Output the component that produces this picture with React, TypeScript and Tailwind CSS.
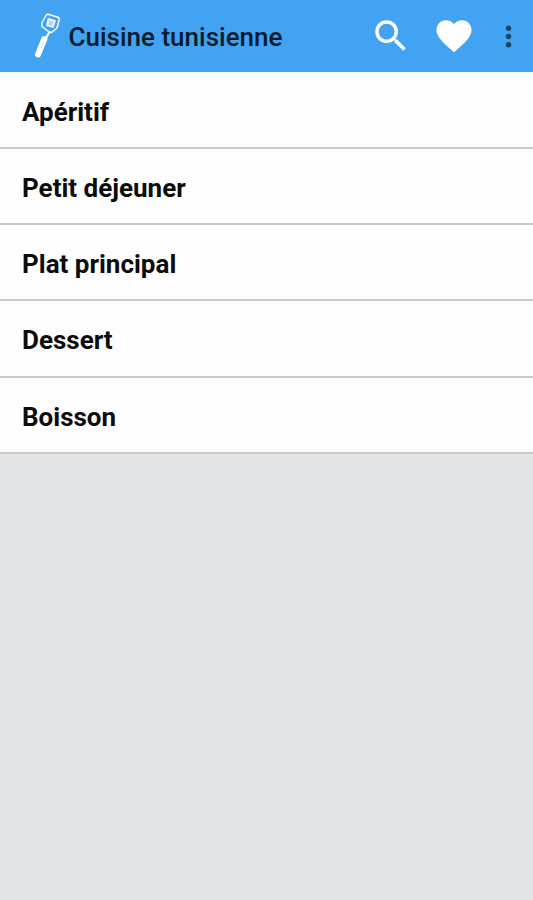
import React from "react";
import { MdFavorite, MdMoreVert, MdSearch } from "react-icons/md";

const CATEGORIES = ["Apéritif", "Petit déjeuner", "Plat principal", "Dessert", "Boisson"];

function SpatulaIcon() {
  return (
    <svg width="28" height="46" viewBox="0 0 28 46" fill="none">
      {/* blade */}
      <path
        d="M13 2.500 Q13.500 1 15 1.300 L25 4.300 Q26.500 5 26.200 6.500 L24 15 L18.500 19.500 L16 19 L9 13.500 L8.700 10 Z"
        stroke="white"
        strokeWidth="1.500"
        strokeLinejoin="round"
      />
      <path
        d="M15.500 5.800 L22 7.800 L20 14 L14 12.500 Z"
        fill="white"
        fillOpacity="0.6"
        stroke="white"
        strokeWidth="1.800"
        strokeLinejoin="round"
        strokeOpacity="0.85"
      />
      {/* handle */}
      <path d="M17 18 L12.500 26" stroke="white" strokeWidth="2.200" />
      <path d="M11.300 26 L5 41.500" stroke="white" strokeWidth="6" strokeLinecap="round" />
      <path d="M10.500 29 L8 35" stroke="#c5e3fb" strokeWidth="1" strokeLinecap="round" />
    </svg>
  );
}

export default function App() {
  return (
    <div className="flex h-[900px] w-[533px] flex-col bg-[#e2e4e6] font-['Roboto',sans-serif]">
      <header className="flex h-[72px] items-center bg-[#41a3f1] pl-[33px]">
        <SpatulaIcon />
        <h1 className="ml-[7.500px] flex-1 pt-0.5 text-[26px] font-medium text-[#081c2c]">Cuisine tunisienne</h1>
        <MdSearch size={42} className="mr-[21px] text-white" />
        <MdFavorite size={42} className="mr-[17px] text-white" />
        <MdMoreVert size={33} className="mr-[8px] text-[#1d4364]" />
      </header>
      <ul>
        {CATEGORIES.map((name) => (
          <li
            key={name}
            className="flex h-[76.200px] items-center border-b-2 border-[#c9c9c9] bg-[#fdfdfd] pt-[5px] pl-[22px] text-[26px] font-bold text-[#0c0c0c] first:h-[77px]"
          >
            {name}
          </li>
        ))}
      </ul>
    </div>
  );
}
